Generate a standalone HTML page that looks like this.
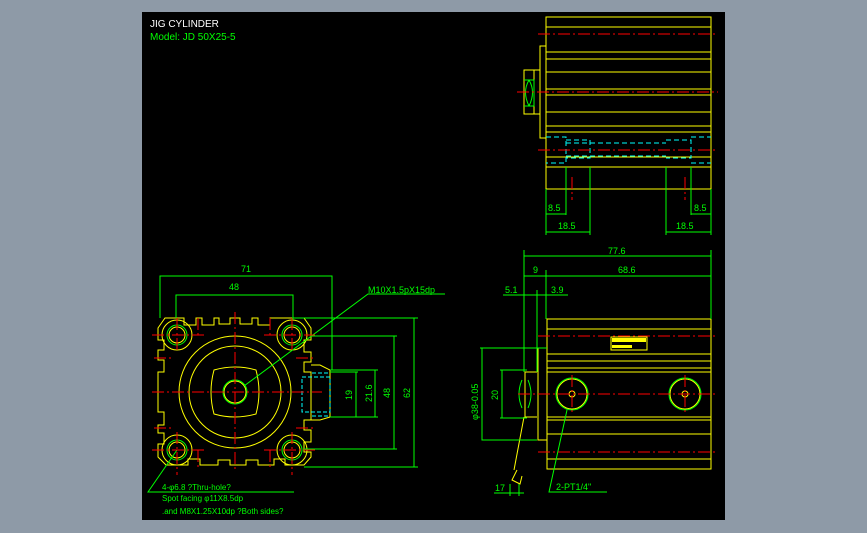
<!DOCTYPE html>
<html><head><meta charset="utf-8"><style>
html,body{margin:0;padding:0;background:#8e9aa7;width:867px;height:533px;overflow:hidden}
svg{display:block}
text{font-family:"Liberation Sans",sans-serif}
</style></head><body>
<svg width="867" height="533" viewBox="0 0 867 533" xmlns="http://www.w3.org/2000/svg">
<rect x="142" y="12" width="583" height="508" fill="#000"/>
<text x="150" y="27" fill="#fff" font-size="10">JIG CYLINDER</text>
<text x="150" y="40" fill="#00ff00" font-size="10">Model:  JD  50X25-5</text>

<!-- FRONT VIEW -->
<g fill="none" stroke="#ffff00" stroke-width="1">
<path d="M165,318 H184 V325 H196 V318 H202 V325 H214 V318 H219 L219,324 H230 V318 H240 V324 H252 V318 H258 V325 H270 V318 H285 L304,318 L311,328 V340 H304 V352 H311 V362 H304 V372 H311 V420 H304 V430 H311 V442 H304 V452 H311 V457 L304,465 H285 V459 H274 V465 H258 V460 H246 V465 H230 V460 H218 V465 H200 V459 H188 V465 H166 L158,457 V444 H164 V433 H158 V425 H164 V412 H158 V372 H164 V360 H158 V350 H164 V340 H158 V328 Z"/>
<circle cx="235" cy="392" r="56"/>
<circle cx="235" cy="392" r="46"/>
<path d="M214,370 Q235,364 256,370 Q262,392 256,414 Q235,420 214,414 Q208,392 214,370 Z"/>
<circle cx="235" cy="392" r="11"/>
<circle cx="177" cy="335" r="15"/><circle cx="177" cy="335" r="8"/>
<circle cx="292" cy="335" r="15"/><circle cx="292" cy="335" r="8"/>
<circle cx="177" cy="450" r="15"/><circle cx="177" cy="450" r="8"/>
<circle cx="292" cy="450" r="15"/><circle cx="292" cy="450" r="8"/>
<path d="M311,365 H320 L330,370 V417 L320,420 H311"/>
</g>
<g fill="none" stroke="#00ff00" stroke-width="1">
<circle cx="235" cy="392" r="12"/>
<circle cx="177" cy="335" r="10"/><circle cx="292" cy="335" r="10"/>
<circle cx="177" cy="450" r="10"/><circle cx="292" cy="450" r="10"/>
<path d="M160,318 V276 H332 V370 M176,318 V295 H293 V320"/>
<path d="M292,318 H418 M311,336 H397 M330,370 H378 M330,417 H378 M330,372 H358 M304,449 H397 M304,467 H418"/>
<path d="M414,318 V467 M394,336 V449 M375,370 V417 M356,372 V417"/>
<path d="M244,386 L368,294 H445"/>
<path d="M177,450 L148,492 H294"/>
</g>
<g fill="none" stroke="#00ffff" stroke-width="1" stroke-dasharray="4,2">
<path d="M302,377 H330 V412 H302 Z M312,373 H328 M312,416 H328"/>
</g>
<g fill="none" stroke="#ff0000" stroke-width="1" stroke-dasharray="12,3,2,3">
<path d="M152,392 H322 M235,312 V472"/>
<path d="M152,335 H205 M264,335 H315 M152,450 H205 M264,450 H315"/>
<path d="M177,318 V353 M292,318 V353 M177,432 V475 M292,432 V475"/>
<path d="M198,318 V335 M270,318 V335 M198,450 V468 M270,450 V468"/>
<path d="M154,358 H172 M154,428 H172 M296,358 H315 M296,428 H315"/>
</g>
<g fill="#00ff00" font-size="9">
<text x="241" y="272">71</text>
<text x="229" y="290">48</text>
<text x="368" y="293">M10X1.5pX15dp</text>
<text x="352" y="400" transform="rotate(-90 352 400)">19</text>
<text x="372" y="402" transform="rotate(-90 372 402)">21.6</text>
<text x="390" y="398" transform="rotate(-90 390 398)">48</text>
<text x="410" y="398" transform="rotate(-90 410 398)">62</text>
<text x="162" y="490" font-size="8">4-φ6.8      ?Thru-hole?</text>
<text x="162" y="501" font-size="8">Spot facing  φ11X8.5dp</text>
<text x="162" y="514" font-size="8">.and M8X1.25X10dp ?Both sides?</text>
</g>

<!-- SIDE VIEW -->
<g fill="none" stroke="#ffff00" stroke-width="1">
<path d="M547,319 H711 V469 H547 Z"/>
<path d="M547,329 H711 M547,354 H711 M547,361 H711 M547,368 H711 M547,372 H711 M547,417 H711 M547,420 H711 M547,434 H711 M547,459 H711"/>
<path d="M547,348 H538 V440 H547 M537,372 H525 V417 H537"/>
<circle cx="572" cy="394" r="15"/><circle cx="572" cy="394" r="3"/>
<circle cx="685" cy="394" r="15"/><circle cx="685" cy="394" r="3"/>
<rect x="611" y="337" width="36" height="13"/>
<path d="M524,417 L514,470 M517,470 L512,480 L520,484 L522,476"/>
</g>
<rect x="612" y="338" width="34" height="4" fill="#ffff00"/>
<rect x="612" y="345" width="20" height="3" fill="#ffff00"/>
<g fill="none" stroke="#00ff00" stroke-width="1">
<path d="M524,256 H711 M524,250 V372 M711,250 V319 M524,276 H711 M546,270 V319 M503,295 H568 M537,290 V372"/>
<path d="M480,348 H547 M482,348 V440 H537 M500,370 H527 M500,418 H527 M502,370 V418"/>
<circle cx="572" cy="394" r="16"/><circle cx="685" cy="394" r="16"/>
<path d="M567,410 L549,492 H607 M494,493 H524 M510,484 V496 M519,484 V496"/>
<path d="M528,380 Q534,394 528,408 M522,380 Q516,394 522,408"/>
</g>
<g fill="none" stroke="#ff0000" stroke-width="1" stroke-dasharray="12,3,2,3">
<path d="M538,336 H718 M518,394 H718 M538,452 H718 M572,375 V413 M685,375 V413"/>
</g>
<g fill="#00ff00" font-size="9">
<text x="608" y="254">77.6</text>
<text x="533" y="273">9</text>
<text x="618" y="273">68.6</text>
<text x="505" y="293">5.1</text>
<text x="551" y="293">3.9</text>
<text x="498" y="400" transform="rotate(-90 498 400)">20</text>
<text x="478" y="420" transform="rotate(-90 478 420)">φ38-0.05</text>
<text x="495" y="491">17</text>
<text x="556" y="490">2-PT1/4"</text>
</g>

<!-- TOP VIEW -->
<g fill="none" stroke="#ffff00" stroke-width="1">
<path d="M546,17 H711 V189 H546 Z"/>
<path d="M546,27 H711 M546,52 H711 M546,59 H711 M546,72 H711 M546,89 H711 M546,95 H711 M546,112 H711 M546,126 H711 M546,132 H711 M546,157 H711 M546,167 H711"/>
<path d="M546,46 H540 V138 H546 M540,70 H534 V114 H540 M534,70 H524 V114 H534"/>
</g>
<g fill="none" stroke="#00ff00" stroke-width="1">
<path d="M524,80 H534 V106 H524 M529,80 Q522,92 529,106 M529,80 Q536,92 529,106"/>
<path d="M546,189 V235 M566,167 V215 M590,167 V235 M666,167 V235 M691,167 V215 M711,189 V235"/>
<path d="M546,214 H566 M546,232 H590 M666,232 H711 M691,214 H711"/>
</g>
<g fill="none" stroke="#00ffff" stroke-width="1" stroke-dasharray="5,3">
<path d="M546,137 H566 V163 H546 M566,140 H590 V158 H566 M566,143 H666 M566,156 H666 M666,140 H691 V158 H666 M691,137 H711 M691,163 H711"/>
</g>
<g fill="none" stroke="#ff0000" stroke-width="1" stroke-dasharray="12,3,2,3">
<path d="M538,34 H718 M517,92 H718 M538,150 H718 M572,177 V200 M685,177 V200"/>
</g>
<g fill="#00ff00" font-size="9">
<text x="548" y="211">8.5</text>
<text x="558" y="229">18.5</text>
<text x="694" y="211">8.5</text>
<text x="676" y="229">18.5</text>
</g>
</svg>
</body></html>
